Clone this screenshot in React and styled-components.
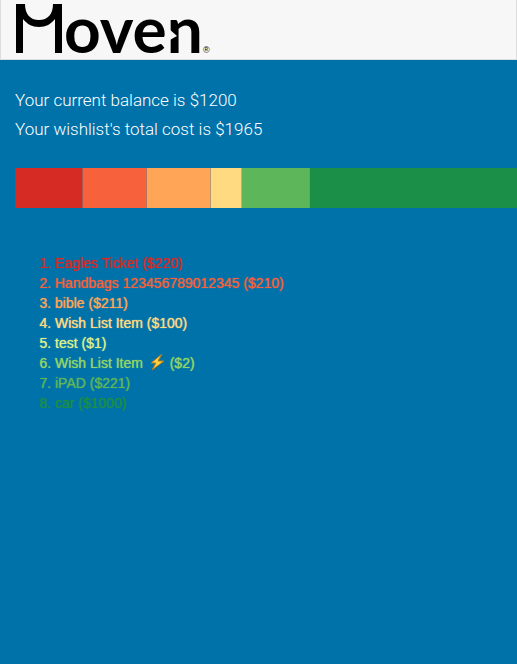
import React from "react";
import styled, { createGlobalStyle } from "styled-components";

const GlobalStyle = createGlobalStyle`
  * { box-sizing: border-box; }
  body {
    margin: 0;
    background: #0072aa;
    font-family: "Liberation Sans", Arial, sans-serif;
  }
`;

const Page = styled.div`
  min-height: 100vh;
  overflow-x: hidden;
`;

const Header = styled.header`
  height: 60px;
  padding-left: 14px;
  background: #f7f7f7;
  border: 1px solid #dddddd;
  border-top: 0;
`;

const Logo = styled.svg`
  display: block;
  width: 200px;
  height: 58px;
  overflow: visible;
`;

const Wordmark = styled.text`
  font-family: Lato, sans-serif;
  font-size: 64px;
  font-weight: 700;
`;

const Registered = styled.text`
  font-family: "Liberation Sans", Arial, sans-serif;
  font-size: 9px;
`;

const Summary = styled.section`
  padding: 26px 15px 0;
`;

const SummaryLine = styled.p`
  margin: 0;
  color: #ffffff;
  font-family: Roboto, "Liberation Sans", sans-serif;
  font-size: 17px;
  font-weight: 300;
  line-height: 29px;
`;

const CostBar = styled.div`
  display: flex;
  height: 40px;
  margin: 24px 0 0 15px;
`;

const Segment = styled.div`
  flex: ${({ $last, $width }) => ($last ? "1 0 0" : `0 0 ${$width}px`)};
  background: ${({ $color }) => $color};
  border-right: ${({ $last }) => ($last ? "0" : "1px solid rgba(119, 136, 119, 0.5)")};
`;

const WishList = styled.ol`
  margin: 45px 0 0;
  padding: 0 15px 0 55px;
  font-size: 14px;
  line-height: 20px;
`;

const WishItem = styled.li`
  color: ${({ $color }) => $color};
  text-shadow: 0 0 1px ${({ $color }) => $color};
`;

const Bolt = styled.svg`
  width: 18px;
  height: 18px;
  margin-left: 1px;
  vertical-align: -3px;
`;

const items = [
  { name: "Eagles Ticket", cost: 220, color: "#d62a25", width: 68 },
  { name: "Handbags 123456789012345", cost: 210, color: "#f7623c", width: 64 },
  { name: "bible", cost: 211, color: "#ffa558", width: 64 },
  { name: "Wish List Item", cost: 100, color: "#ffda81", width: 31 },
  { name: "test", cost: 1, color: "#d9ef8b", width: 0 },
  { name: "Wish List Item", cost: 2, color: "#91d568", width: 0, bolt: true },
  { name: "iPAD", cost: 221, color: "#5db65a", width: 68 },
  { name: "car", cost: 1000, color: "#1b8f48", width: 0 },
];

function MovenLogo() {
  return (
    <Logo viewBox="15 0 200 58" role="img" aria-label="Moven">
      <rect x="16" y="4" width="7" height="49" />
      <rect x="55" y="4" width="7" height="49" />
      <path d="M16 4h9c0 10 5 16 14 16s14-6 14-16h9v15h-7c-4 5-9 8-16 8s-12-3-16-8h-7z" />
      <Wordmark x="64" y="53">oven</Wordmark>
      <path d="M168 28l9 8-9 5z" fill="#f7f7f7" />
      <Registered x="203" y="53">®</Registered>
    </Logo>
  );
}

export default function App() {
  return (
    <Page>
      <GlobalStyle />
      <Header>
        <MovenLogo />
      </Header>
      <main>
        <Summary>
          <SummaryLine>Your current balance is $1200</SummaryLine>
          <SummaryLine>Your wishlist's total cost is $1965</SummaryLine>
        </Summary>
        <CostBar>
          {items
            .filter((item) => item.width > 0 || item.cost === 1000)
            .map((item) => (
              <Segment
                key={item.name + item.cost}
                $color={item.color}
                $width={item.width}
                $last={item.cost === 1000}
              />
            ))}
        </CostBar>
        <WishList>
          {items.map((item) => (
            <WishItem key={item.name + item.cost} $color={item.color}>
              {item.name}{" "}
              {item.bolt && (
                <>
                  <Bolt viewBox="0 0 18 18" role="img" aria-label="lightning">
                    <path d="M14 1L3 10h5L4 17 16 8h-6z" fill="#ffd443" stroke="#b87912" />
                  </Bolt>{" "}
                </>
              )}
              (${item.cost})
            </WishItem>
          ))}
        </WishList>
      </main>
    </Page>
  );
}
